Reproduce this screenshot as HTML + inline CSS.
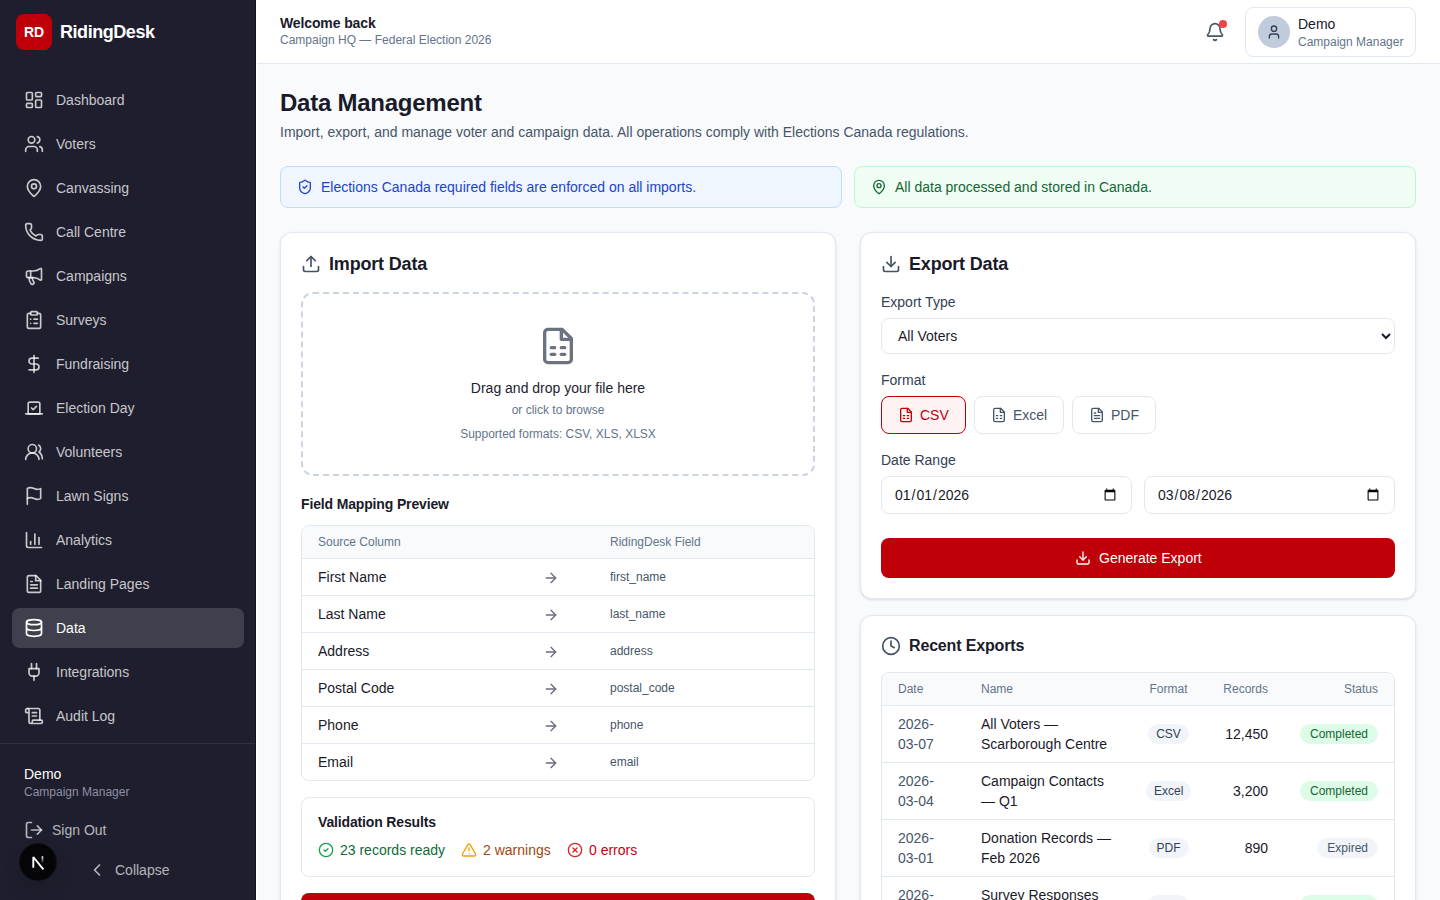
<!DOCTYPE html>
<html lang="en">
<head>
<meta charset="utf-8">
<title>RidingDesk - Data Management</title>
<style>
*{box-sizing:border-box;margin:0;padding:0}
html,body{width:1440px;height:900px;overflow:hidden}
body{font-family:"Liberation Sans",sans-serif;background:#f8fafc;color:#1a1a2a;position:relative;font-size:14px;line-height:20px}
svg{display:block;fill:none;stroke:currentColor;stroke-width:2;stroke-linecap:round;stroke-linejoin:round}
.abs{position:absolute}
/* sidebar */
#sb{position:absolute;left:0;top:0;width:256px;height:900px;background:#1e1e2e;border-right:1px solid #10101c}
#logo{position:absolute;left:16px;top:14px;width:36px;height:36px;border-radius:8px;background:#c00008;color:#fff;font-weight:700;font-size:14px;line-height:36px;text-align:center}
#brand{position:absolute;left:60px;top:18px;font-size:18px;line-height:28px;font-weight:700;color:#fff;letter-spacing:-0.45px}
.nav{position:absolute;left:12px;width:232px;height:40px;border-radius:8px;color:rgba(255,255,255,.76)}
.nav svg{position:absolute;left:12px;top:10px;width:20px;height:20px}
.nav span{position:absolute;left:44px;top:10px;font-size:14px;line-height:20px}
.nav.active{background:rgba(255,255,255,.15);color:#fff}
.card{background:#fff;border:1px solid #e2e8f0;border-radius:12px;box-shadow:0 1px 3px 0 rgba(0,0,0,.1),0 1px 2px -1px rgba(0,0,0,.1)}
.h2{font-size:18px;line-height:28px;font-weight:700;color:#1a1a2a;letter-spacing:-0.18px;white-space:nowrap}
.h3{font-size:14px;line-height:20px;font-weight:700;color:#1a1a2a;letter-spacing:-0.15px;white-space:nowrap}
.tbl{border:1px solid #e2e8f0;border-radius:8px;overflow:hidden;background:#fff}
.thead{position:relative;background:#f8fafc;border-bottom:1px solid #e2e8f0}
.th{font-size:12px;line-height:16px;color:#64748b;white-space:nowrap}
.frow{position:relative;height:37px;border-bottom:1px solid #e2e8f0}
.frow .src{position:absolute;left:16px;top:8px;font-size:14px;line-height:20px;color:#1a1a2a}
.frow .arr{position:absolute;left:241px;top:11px;width:16px;height:16px;color:#6a6a7c}
.frow .fld{position:absolute;left:308px;top:10px;font-size:12px;line-height:16px;color:#475569}
.lbl{font-size:14px;line-height:20px;color:#334155;white-space:nowrap}
.fbtn{height:38px;border:1px solid #e2e8f0;border-radius:8px;background:#fff;color:#475569}
.fbtn svg{position:absolute;left:16px;top:10px;width:16px;height:16px}
.fbtn span{position:absolute;left:38px;top:8px;white-space:nowrap}
.fbtn.on{border-color:#c00008;background:#fef2f2;color:#c00008}
.dinp{height:38px;border:1px solid #e2e8f0;border-radius:8px;background:#fff;color:#1a1a2a;font-family:"Liberation Sans",sans-serif;font-size:14px;padding:0 12px;outline:none}
.sel{border:1px solid #e2e8f0;border-radius:8px;background:#fff;color:#1a1a2a;font-family:"Liberation Sans",sans-serif;font-size:14px;padding:0 12px;outline:none}
.dinp span{position:absolute;left:13px;top:8px;white-space:nowrap}
.dinp svg{position:absolute;right:14px;top:12px;width:12px;height:12px}
.rt{border-collapse:collapse;table-layout:fixed;width:512px}
.rt td{padding:8px 16px;font-size:14px;line-height:20px;color:#1a1a2a;vertical-align:middle;border-bottom:1px solid #e2e8f0;white-space:nowrap}
.rt tr{height:57px}
.rt tr.hd{height:32px;background:#f8fafc}
.rt tr.hd td{font-size:12px;line-height:16px;color:#64748b}
.rt td.c{text-align:center}
.rt td.r{text-align:right}
.rt td.dt{color:#475569}
.bdg{display:inline-block;vertical-align:middle;position:relative;top:-1px;padding:2px 8px;border-radius:9999px;background:#f1f5f9;color:#334155;font-size:12px;line-height:16px}
.bdg.ok{background:#dcfce7;color:#166534}
.bdg.st{padding:2px 10px;color:#475569}
.bdg.ok.st{color:#166534}
#sbline{position:absolute;left:0;top:743px;width:255px;height:1px;background:#332f44}
</style>
</head>
<body>
<div id="sb">
  <div id="logo">RD</div>
  <div id="brand">RidingDesk</div>
  <div class="nav" style="top:80px"><svg viewBox="0 0 24 24"><rect width="7" height="9" x="3" y="3" rx="1"/><rect width="7" height="5" x="14" y="3" rx="1"/><rect width="7" height="9" x="14" y="12" rx="1"/><rect width="7" height="5" x="3" y="16" rx="1"/></svg><span>Dashboard</span></div>
  <div class="nav" style="top:124px"><svg viewBox="0 0 24 24"><path d="M16 21v-2a4 4 0 0 0-4-4H6a4 4 0 0 0-4 4v2"/><path d="M16 3.128a4 4 0 0 1 0 7.744"/><path d="M22 21v-2a4 4 0 0 0-3-3.87"/><circle cx="9" cy="7" r="4"/></svg><span>Voters</span></div>
  <div class="nav" style="top:168px"><svg viewBox="0 0 24 24"><path d="M20 10c0 4.993-5.539 10.193-7.399 11.799a1 1 0 0 1-1.202 0C9.539 20.193 4 14.993 4 10a8 8 0 0 1 16 0"/><circle cx="12" cy="10" r="3"/></svg><span>Canvassing</span></div>
  <div class="nav" style="top:212px"><svg viewBox="0 0 24 24"><path d="M13.832 16.568a1 1 0 0 0 1.213-.303l.355-.465A2 2 0 0 1 17 15h3a2 2 0 0 1 2 2v3a2 2 0 0 1-2 2A18 18 0 0 1 2 4a2 2 0 0 1 2-2h3a2 2 0 0 1 2 2v3a2 2 0 0 1-.8 1.6l-.468.351a1 1 0 0 0-.292 1.233 14 14 0 0 0 6.392 6.384"/></svg><span>Call Centre</span></div>
  <div class="nav" style="top:256px"><svg viewBox="0 0 24 24"><path d="M11 6a13 13 0 0 0 8.4-2.8A1 1 0 0 1 21 4v12a1 1 0 0 1-1.6.8A13 13 0 0 0 11 14H5a2 2 0 0 1-2-2V8a2 2 0 0 1 2-2z"/><path d="M6 14a12 12 0 0 0 2.4 7.2 2 2 0 0 0 3.2-2.4A8 8 0 0 1 10 14"/><path d="M8 6v8"/></svg><span>Campaigns</span></div>
  <div class="nav" style="top:300px"><svg viewBox="0 0 24 24"><rect width="8" height="4" x="8" y="2" rx="1" ry="1"/><path d="M16 4h2a2 2 0 0 1 2 2v14a2 2 0 0 1-2 2H6a2 2 0 0 1-2-2V6a2 2 0 0 1 2-2h2"/><path d="M12 11h4"/><path d="M12 16h4"/><path d="M8 11h.01"/><path d="M8 16h.01"/></svg><span>Surveys</span></div>
  <div class="nav" style="top:344px"><svg viewBox="0 0 24 24"><line x1="12" x2="12" y1="2" y2="22"/><path d="M17 5H9.5a3.5 3.5 0 0 0 0 7h5a3.5 3.5 0 0 1 0 7H6"/></svg><span>Fundraising</span></div>
  <div class="nav" style="top:388px"><svg viewBox="0 0 24 24"><path d="m9 12 2 2 4-4"/><path d="M5 7c0-1.1.9-2 2-2h10a2 2 0 0 1 2 2v12H5V7Z"/><path d="M22 19H2"/></svg><span>Election Day</span></div>
  <div class="nav" style="top:432px"><svg viewBox="0 0 24 24"><path d="M18 21a8 8 0 0 0-16 0"/><circle cx="10" cy="8" r="5"/><path d="M22 20c0-3.37-2-6.5-4-8a5 5 0 0 0-.45-8.3"/></svg><span>Volunteers</span></div>
  <div class="nav" style="top:476px"><svg viewBox="0 0 24 24"><path d="M4 15s1-1 4-1 5 2 8 2 4-1 4-1V3s-1 1-4 1-5-2-8-2-4 1-4 1z"/><line x1="4" x2="4" y1="22" y2="15"/></svg><span>Lawn Signs</span></div>
  <div class="nav" style="top:520px"><svg viewBox="0 0 24 24"><path d="M3 3v16a2 2 0 0 0 2 2h16"/><path d="M18 17V9"/><path d="M13 17V5"/><path d="M8 17v-3"/></svg><span>Analytics</span></div>
  <div class="nav" style="top:564px"><svg viewBox="0 0 24 24"><path d="M14.5 2H6a2 2 0 0 0-2 2v16a2 2 0 0 0 2 2h12a2 2 0 0 0 2-2V7.5L14.5 2z"/><polyline points="14 2 14 8 20 8"/><path d="M10 9H8"/><path d="M16 13H8"/><path d="M16 17H8"/></svg><span>Landing Pages</span></div>
  <div class="nav active" style="top:608px"><svg viewBox="0 0 24 24"><ellipse cx="12" cy="5" rx="9" ry="3"/><path d="M3 5V19A9 3 0 0 0 21 19V5"/><path d="M3 12A9 3 0 0 0 21 12"/></svg><span>Data</span></div>
  <div class="nav" style="top:652px"><svg viewBox="0 0 24 24"><path d="M12 22v-5"/><path d="M9 8V2"/><path d="M15 8V2"/><path d="M18 8v5a4 4 0 0 1-4 4h-4a4 4 0 0 1-4-4V8Z"/></svg><span>Integrations</span></div>
  <div class="nav" style="top:696px"><svg viewBox="0 0 24 24"><path d="M15 12h-5"/><path d="M15 8h-5"/><path d="M19 17V5a2 2 0 0 0-2-2H4"/><path d="M8 21h12a2 2 0 0 0 2-2v-1a1 1 0 0 0-1-1H11a1 1 0 0 0-1 1v1a2 2 0 1 1-4 0V5a2 2 0 1 0-4 0v2a1 1 0 0 0 1 1h3"/></svg><span>Audit Log</span></div>
  <div id="sbline"></div>
  <div class="abs" style="left:24px;top:764px;font-size:14px;line-height:20px;color:#fff">Demo</div>
  <div class="abs" style="left:24px;top:784px;font-size:12px;line-height:16px;color:#8e8ea4">Campaign Manager</div>
  <div class="abs" style="left:24px;top:820px;width:200px;height:20px;color:rgba(255,255,255,.68)"><svg viewBox="0 0 24 24" style="position:absolute;left:0;top:0;width:20px;height:20px"><path d="M9 21H5a2 2 0 0 1-2-2V5a2 2 0 0 1 2-2h4"/><polyline points="16 17 21 12 16 7"/><line x1="21" x2="9" y1="12" y2="12"/></svg><span style="position:absolute;left:28px;top:0">Sign Out</span></div>
  <div class="abs" style="left:87px;top:860px;width:100px;height:20px;color:rgba(255,255,255,.68)"><svg viewBox="0 0 24 24" style="position:absolute;left:0;top:0;width:20px;height:20px"><path d="m15 18-6-6 6-6"/></svg><span style="position:absolute;left:28px;top:0">Collapse</span></div>
</div>
<div id="nxt" class="abs" style="left:20px;top:844px;width:36px;height:36px;border-radius:50%;background:#050508;box-shadow:0 0 0 1px rgba(0,0,0,.45),0 12px 24px -6px rgba(0,0,0,.25)"><svg viewBox="0 0 36 36" style="position:absolute;left:0;top:0;width:36px;height:36px;stroke-linecap:butt;stroke-linejoin:miter"><defs><linearGradient id="ng" x1="0" y1="0" x2="0" y2="1"><stop offset="0" stop-color="#fff"/><stop offset="1" stop-color="#fff" stop-opacity="0"/></linearGradient></defs><path d="M13.3 23.7V13L23.4 25.4" stroke="#fff" stroke-width="1.9" fill="none" stroke-linejoin="bevel"/><rect x="21.6" y="12.3" width="1.7" height="7" fill="url(#ng)" stroke="none"/></svg></div>
<div class="abs" style="left:256px;top:0;width:1px;height:900px;background:#fff;z-index:3"></div>
<!-- header -->
<div id="hdr" class="abs" style="left:256px;top:0;width:1184px;height:64px;background:#fff;border-bottom:1px solid #e2e8f0">
  <div class="abs" style="left:24px;top:13px;font-size:14px;line-height:20px;font-weight:700;color:#1a1a2a;letter-spacing:-0.12px">Welcome back</div>
  <div class="abs" style="left:24px;top:32px;font-size:12px;line-height:16px;color:#64748b">Campaign HQ — Federal Election 2026</div>
  <div class="abs" style="left:949px;top:22px;width:20px;height:20px;color:#475569"><svg viewBox="0 0 24 24" style="width:20px;height:20px"><path d="M10.268 21a2 2 0 0 0 3.464 0"/><path d="M3.262 15.326A1 1 0 0 0 4 17h16a1 1 0 0 0 .74-1.673C19.41 13.956 18 12.499 18 8A6 6 0 0 0 6 8c0 4.499-1.411 5.956-2.738 7.326"/></svg><div class="abs" style="left:14px;top:-2px;width:8px;height:8px;border-radius:50%;background:#ef4444"></div></div>
  <div class="abs" style="left:989px;top:7px;width:171px;height:50px;border:1px solid #e2e8f0;border-radius:8px">
    <div class="abs" style="left:12px;top:8px;width:32px;height:32px;border-radius:50%;background:#c0ccdc;color:#334155"><svg viewBox="0 0 24 24" style="position:absolute;left:8px;top:8px;width:16px;height:16px"><path d="M19 21v-2a4 4 0 0 0-4-4H9a4 4 0 0 0-4 4v2"/><circle cx="12" cy="7" r="4"/></svg></div>
    <div class="abs" style="left:52px;top:6px;font-size:14px;line-height:20px;color:#1a1a2a;white-space:nowrap">Demo</div>
    <div class="abs" style="left:52px;top:26px;font-size:12px;line-height:16px;color:#64748b;white-space:nowrap">Campaign Manager</div>
  </div>
</div>
<div class="abs" style="left:280px;top:87px;font-size:24px;line-height:32px;font-weight:700;color:#1a1a2a;white-space:nowrap;letter-spacing:-0.25px">Data Management</div>
<div class="abs" style="left:280px;top:122px;font-size:14px;line-height:20px;color:#475569;white-space:nowrap">Import, export, and manage voter and campaign data. All operations comply with Elections Canada regulations.</div>
<div class="abs banner" style="left:280px;top:166px;width:562px;height:42px;background:#eff6ff;border:1px solid #bfdbfe;border-radius:8px;color:#2344c6">
  <svg viewBox="0 0 24 24" style="position:absolute;left:16px;top:12px;width:16px;height:16px"><path d="M20 13c0 5-3.5 7.5-7.66 8.95a1 1 0 0 1-.67-.01C7.5 20.5 4 18 4 13V6a1 1 0 0 1 1-1c2 0 4.5-1.2 6.24-2.72a1.17 1.17 0 0 1 1.52 0C14.51 3.81 17 5 19 5a1 1 0 0 1 1 1z"/><path d="m9 12 2 2 4-4"/></svg>
  <span class="abs" style="left:40px;top:10px;white-space:nowrap">Elections Canada required fields are enforced on all imports.</span>
</div>
<div class="abs banner" style="left:854px;top:166px;width:562px;height:42px;background:#f0fdf4;border:1px solid #bbf7d0;border-radius:8px;color:#166534">
  <svg viewBox="0 0 24 24" style="position:absolute;left:16px;top:12px;width:16px;height:16px"><path d="M20 10c0 4.993-5.539 10.193-7.399 11.799a1 1 0 0 1-1.202 0C9.539 20.193 4 14.993 4 10a8 8 0 0 1 16 0"/><circle cx="12" cy="10" r="3"/></svg>
  <span class="abs" style="left:40px;top:10px;white-space:nowrap">All data processed and stored in Canada.</span>
</div>
<div id="imp" class="abs card" style="left:280px;top:232px;width:556px;height:720px">
  <svg viewBox="0 0 24 24" class="abs" style="left:20px;top:21px;width:20px;height:20px;color:#465366"><path d="M21 15v4a2 2 0 0 1-2 2H5a2 2 0 0 1-2-2v-4"/><polyline points="17 8 12 3 7 8"/><line x1="12" x2="12" y1="3" y2="15"/></svg>
  <div class="abs h2" style="left:48px;top:17px">Import Data</div>
  <div class="abs" style="left:20px;top:59px;width:514px;height:184px;border:2px dashed #cbd5e1;border-radius:12px;text-align:center">
    <svg viewBox="0 0 24 24" class="abs" style="left:235px;top:32px;width:40px;height:40px;color:#6b7280"><path d="M14.5 2H6a2 2 0 0 0-2 2v16a2 2 0 0 0 2 2h12a2 2 0 0 0 2-2V7.5L14.5 2z"/><polyline points="14 2 14 8 20 8"/><path d="M8 13h2"/><path d="M14 13h2"/><path d="M8 17h2"/><path d="M14 17h2"/></svg>
    <div class="abs" style="left:0;width:510px;top:84px;font-size:14px;line-height:20px;color:#222230">Drag and drop your file here</div>
    <div class="abs" style="left:0;width:510px;top:108px;font-size:12px;line-height:16px;color:#64748b">or click to browse</div>
    <div class="abs" style="left:0;width:510px;top:132px;font-size:12px;line-height:16px;color:#64748b">Supported formats: CSV, XLS, XLSX</div>
  </div>
  <div class="abs h3" style="left:20px;top:261px">Field Mapping Preview</div>
  <div class="abs tbl" style="left:20px;top:292px;width:514px;height:256px">
    <div class="thead" style="height:33px"><span class="abs th" style="left:16px;top:8px">Source Column</span><span class="abs th" style="left:308px;top:8px">RidingDesk Field</span></div>
    <div class="frow"><span class="src">First Name</span><svg viewBox="0 0 24 24" class="arr"><path d="M5 12h14"/><path d="m12 5 7 7-7 7"/></svg><span class="fld">first_name</span></div>
    <div class="frow"><span class="src">Last Name</span><svg viewBox="0 0 24 24" class="arr"><path d="M5 12h14"/><path d="m12 5 7 7-7 7"/></svg><span class="fld">last_name</span></div>
    <div class="frow"><span class="src">Address</span><svg viewBox="0 0 24 24" class="arr"><path d="M5 12h14"/><path d="m12 5 7 7-7 7"/></svg><span class="fld">address</span></div>
    <div class="frow"><span class="src">Postal Code</span><svg viewBox="0 0 24 24" class="arr"><path d="M5 12h14"/><path d="m12 5 7 7-7 7"/></svg><span class="fld">postal_code</span></div>
    <div class="frow"><span class="src">Phone</span><svg viewBox="0 0 24 24" class="arr"><path d="M5 12h14"/><path d="m12 5 7 7-7 7"/></svg><span class="fld">phone</span></div>
    <div class="frow" style="border-bottom:0"><span class="src">Email</span><svg viewBox="0 0 24 24" class="arr"><path d="M5 12h14"/><path d="m12 5 7 7-7 7"/></svg><span class="fld">email</span></div>
  </div>
  <div class="abs" style="left:20px;top:564px;width:514px;height:80px;border:1px solid #e2e8f0;border-radius:8px">
    <div class="abs h3" style="left:16px;top:14px">Validation Results</div>
    <svg viewBox="0 0 24 24" class="abs" style="left:16px;top:44px;width:16px;height:16px;color:#16a34a"><circle cx="12" cy="12" r="10"/><path d="m9 12 2 2 4-4"/></svg>
    <span class="abs" style="left:38px;top:42px;color:#0f6b36;white-space:nowrap">23 records ready</span>
    <svg viewBox="0 0 24 24" class="abs" style="left:159px;top:44px;width:16px;height:16px;color:#f59e0b"><path d="m21.73 18-8-14a2 2 0 0 0-3.48 0l-8 14A2 2 0 0 0 4 21h16a2 2 0 0 0 1.73-3"/><path d="M12 9v4"/><path d="M12 17h.01"/></svg>
    <span class="abs" style="left:181px;top:42px;color:#a3470f;white-space:nowrap">2 warnings</span>
    <svg viewBox="0 0 24 24" class="abs" style="left:265px;top:44px;width:16px;height:16px;color:#dc2626"><circle cx="12" cy="12" r="10"/><path d="m15 9-6 6"/><path d="m9 9 6 6"/></svg>
    <span class="abs" style="left:287px;top:42px;color:#c4000c;white-space:nowrap">0 errors</span>
  </div>
  <div class="abs" style="left:20px;top:660px;width:514px;height:40px;border-radius:8px;background:#c00008"></div>
</div>
<div id="exp" class="abs card" style="left:860px;top:232px;width:556px;height:367px">
  <svg viewBox="0 0 24 24" class="abs" style="left:20px;top:21px;width:20px;height:20px;color:#465366"><path d="M21 15v4a2 2 0 0 1-2 2H5a2 2 0 0 1-2-2v-4"/><polyline points="7 10 12 15 17 10"/><line x1="12" x2="12" y1="15" y2="3"/></svg>
  <div class="abs h2" style="left:48px;top:17px">Export Data</div>
  <div class="abs lbl" style="left:20px;top:59px">Export Type</div>
  <select class="abs sel" style="left:20px;top:85px;width:514px;height:36px"><option>All Voters</option></select>
  <div class="abs lbl" style="left:20px;top:137px">Format</div>
  <div class="abs fbtn on" style="left:20px;top:163px;width:85px"><svg viewBox="0 0 24 24"><path d="M14.5 2H6a2 2 0 0 0-2 2v16a2 2 0 0 0 2 2h12a2 2 0 0 0 2-2V7.5L14.5 2z"/><polyline points="14 2 14 8 20 8"/><path d="M8 13h2"/><path d="M14 13h2"/><path d="M8 17h2"/><path d="M14 17h2"/></svg><span>CSV</span></div>
  <div class="abs fbtn" style="left:113px;top:163px;width:90px"><svg viewBox="0 0 24 24"><path d="M14.5 2H6a2 2 0 0 0-2 2v16a2 2 0 0 0 2 2h12a2 2 0 0 0 2-2V7.5L14.5 2z"/><polyline points="14 2 14 8 20 8"/><path d="M8 13h2"/><path d="M14 13h2"/><path d="M8 17h2"/><path d="M14 17h2"/></svg><span>Excel</span></div>
  <div class="abs fbtn" style="left:211px;top:163px;width:84px"><svg viewBox="0 0 24 24"><path d="M14.5 2H6a2 2 0 0 0-2 2v16a2 2 0 0 0 2 2h12a2 2 0 0 0 2-2V7.5L14.5 2z"/><polyline points="14 2 14 8 20 8"/><path d="M10 9H8"/><path d="M16 13H8"/><path d="M16 17H8"/></svg><span>PDF</span></div>
  <div class="abs lbl" style="left:20px;top:217px">Date Range</div>
  <input type="date" class="abs dinp" style="left:20px;top:243px;width:251px" value="2026-01-01">
  <input type="date" class="abs dinp" style="left:283px;top:243px;width:251px" value="2026-03-08">
  <div class="abs" style="left:20px;top:305px;width:514px;height:40px;border-radius:8px;background:#c00008;color:#fff">
    <svg viewBox="0 0 24 24" class="abs" style="left:194px;top:12px;width:16px;height:16px"><path d="M21 15v4a2 2 0 0 1-2 2H5a2 2 0 0 1-2-2v-4"/><polyline points="7 10 12 15 17 10"/><line x1="12" x2="12" y1="15" y2="3"/></svg>
    <span class="abs" style="left:218px;top:10px;white-space:nowrap">Generate Export</span>
  </div>
</div>
<div id="rec" class="abs card" style="left:860px;top:615px;width:556px;height:400px">
  <svg viewBox="0 0 24 24" class="abs" style="left:20px;top:20px;width:20px;height:20px;color:#465366"><circle cx="12" cy="12" r="10"/><polyline points="12 6 12 12 16 14"/></svg>
  <div class="abs h2" style="left:48px;top:18px;font-size:16px;line-height:24px;letter-spacing:-0.16px">Recent Exports</div>
  <div class="abs tbl" style="left:20px;top:56px;width:514px;height:330px">
    <table class="rt">
      <colgroup><col style="width:83px"><col style="width:165px"><col style="width:77px"><col style="width:77px"><col style="width:110px"></colgroup>
      <tr class="hd"><td>Date</td><td>Name</td><td class="c">Format</td><td class="r">Records</td><td class="r">Status</td></tr>
      <tr><td class="dt">2026-<br>03-07</td><td>All Voters —<br>Scarborough Centre</td><td class="c"><span class="bdg">CSV</span></td><td class="r">12,450</td><td class="r"><span class="bdg ok st">Completed</span></td></tr>
      <tr><td class="dt">2026-<br>03-04</td><td>Campaign Contacts<br>— Q1</td><td class="c"><span class="bdg">Excel</span></td><td class="r">3,200</td><td class="r"><span class="bdg ok st">Completed</span></td></tr>
      <tr><td class="dt">2026-<br>03-01</td><td>Donation Records —<br>Feb 2026</td><td class="c"><span class="bdg">PDF</span></td><td class="r">890</td><td class="r"><span class="bdg st">Expired</span></td></tr>
      <tr><td class="dt">2026-<br>02-25</td><td>Survey Responses<br>— Ward 12</td><td class="c"><span class="bdg">CSV</span></td><td class="r">1,540</td><td class="r"><span class="bdg ok st">Completed</span></td></tr>
    </table>
  </div>
</div>
</body>
</html>
